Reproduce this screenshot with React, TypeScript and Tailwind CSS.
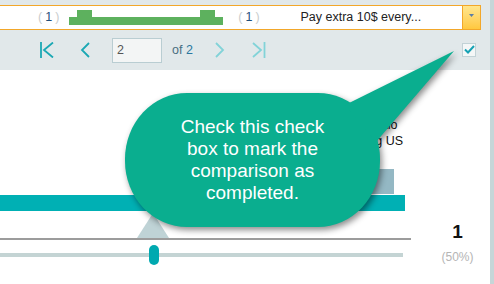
import React from "react";

function Paren({ n }: { n: number }) {
  return (
    <span className="flex items-center gap-[3px] text-[12.5px] leading-none">
      <span className="text-[#c9cdce]">(</span>
      <span className="text-[#1f4f7c]">{n}</span>
      <span className="text-[#c9cdce]">)</span>
    </span>
  );
}

export default function App() {
  return (
    <div className="relative flex h-[284px] w-[494px] overflow-hidden bg-[#e1e8ea] font-['Liberation_Sans',Arial,sans-serif]">
      <div className="flex w-[490px] flex-col">
        {/* top combo row */}
        <div className="h-[30px] pt-[5px] pr-[9px]">
          <div className="flex h-[25px] items-center border-y border-r border-[#f2a72a] bg-white pl-[38px]">
            <Paren n={1} />
            <svg className="ml-[10px] h-[15px] w-[154px]" viewBox="0 0 154 15">
              <path
                d="M0 7 H8 V0 H23 V7 H131 V0 H146 V7 H154 V15 H0 Z"
                fill="#5db15e"
              />
            </svg>
            <span className="ml-[15px]">
              <Paren n={1} />
            </span>
            <span className="flex-1 text-center text-[12.5px] text-[#222]">
              Pay extra 10$ every...
            </span>
            <div className="flex w-[18px] justify-center self-stretch border-l border-[#f2a72a] bg-linear-to-b from-[#ffe68c] to-[#ffc83d] pt-[8px]">
              <svg className="h-[3px] w-[5px]" viewBox="0 0 5 3">
                <path d="M0 0 H5 L2.5 3 Z" fill="#5b7da6" />
              </svg>
            </div>
          </div>
        </div>

        {/* pager toolbar */}
        <div className="flex h-[40px] items-center pl-[40px] pr-[14px]">
          <svg className="h-[16px] w-[14px]" viewBox="0 0 14 16" fill="none" stroke="#1ba8b4" strokeWidth="1.8">
            <path d="M1 0 V16" />
            <path d="M13 0.5 L4 8 L13 15.5" />
          </svg>
          <svg className="ml-[26px] h-[16px] w-[10px]" viewBox="0 0 10 16" fill="none" stroke="#1ba8b4" strokeWidth="1.8">
            <path d="M9 1 L2 8 L9 15" />
          </svg>
          <div className="ml-[22px] flex h-[25px] w-[50px] items-center border border-[#b9cdd2] bg-[#f3f5f5] pl-[4px] text-[12.5px] text-[#555]">
            2
          </div>
          <span className="ml-[10px] text-[12.5px] text-[#4a6e80]">
            of <span className="text-[#2a77a0]">2</span>
          </span>
          <svg className="ml-[22px] h-[16px] w-[10px]" viewBox="0 0 10 16" fill="none" stroke="#82d3d8" strokeWidth="1.8">
            <path d="M1 1 L8 8 L1 15" />
          </svg>
          <svg className="ml-[27px] h-[16px] w-[14px]" viewBox="0 0 14 16" fill="none" stroke="#82d3d8" strokeWidth="1.8">
            <path d="M1 1 L9 8 L1 15" />
            <path d="M12.5 0 V16" />
          </svg>
          <div className="ml-auto flex h-[14px] w-[14px] items-center justify-center border border-[#c2d2d6] bg-[#f4f7f7]">
            <svg className="h-[10px] w-[11px]" viewBox="0 0 11 10" fill="none" stroke="#16a2b4" strokeWidth="2">
              <path d="M1 4.5 L4 7.5 L10 1" />
            </svg>
          </div>
        </div>

        {/* content */}
        <div className="flex flex-1 bg-white">
          <div className="flex w-[425px] flex-col pt-[47px]">
            <div className="ml-[344px] whitespace-nowrap text-[12.5px] leading-[16px] text-[#111]">
              <div>Cost ratio</div>
              <div>Paying US</div>
            </div>
            <div className="ml-[300px] mt-[20px] h-[25px] w-[94px] bg-[#94b8c4]" />
            <div className="mt-[1px] h-[16px] w-[405px] bg-[#00b0b4]" />
            <svg className="ml-[137px] mt-[2px] h-[25px] w-[32px]" viewBox="0 0 32 25">
              <path d="M16 0 L32 25 H0 Z" fill="#bfd3d6" />
            </svg>
            <div className="h-[2px] w-[411px] bg-[#9c9c9c]" />
            <div className="relative mt-[5px] h-[20px] w-[403px]">
              <div className="mt-[8px] h-[4px] w-full bg-[#c4d4d4]" />
              <div className="absolute left-[149px] top-0 h-[20px] w-[10px] rounded-full bg-[#00a9b0]" />
            </div>
          </div>
          <div className="flex flex-1 flex-col items-center pt-[150px]">
            <span className="text-[19px] font-semibold leading-[24px] text-[#111]">1</span>
            <span className="mt-[5px] text-[12px] leading-[16px] text-[#b5b5b5]">(50%)</span>
          </div>
        </div>
      </div>
      <div className="w-[4px] bg-[#c6d6d8]" />

      {/* callout */}
      <svg
        className="pointer-events-none absolute left-0 top-0 h-[284px] w-[494px] drop-shadow-[2px_3px_3px_rgba(0,0,0,0.45)]"
        viewBox="0 0 494 284"
      >
        <rect x="125" y="93" width="255" height="134" rx="62" ry="66" fill="#0aae8f" />
        <path d="M345 105 L454 51 L376 142 Z" fill="#0aae8f" />
      </svg>
      <div className="absolute left-[125px] top-[116px] w-[255px] text-center text-[19px] leading-[22px] text-white">
        Check this check
        <br />
        box to mark the
        <br />
        comparison as
        <br />
        completed.
      </div>
    </div>
  );
}
